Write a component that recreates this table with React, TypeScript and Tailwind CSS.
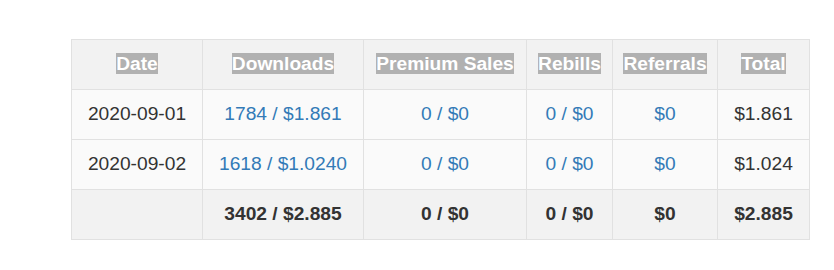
const headers = ['Date', 'Downloads', 'Premium Sales', 'Rebills', 'Referrals', 'Total'];
const widths = ['w-[131px]', 'w-[161px]', 'w-[163px]', 'w-[86px]', 'w-[105px]', 'w-[92px]'];

const rows = [
  { date: '2020-09-01', downloads: '1784 / $1.861', premium: '0 / $0', rebills: '0 / $0', referrals: '$0', total: '$1.861' },
  { date: '2020-09-02', downloads: '1618 / $1.0240', premium: '0 / $0', rebills: '0 / $0', referrals: '$0', total: '$1.024' },
];

const cell = 'h-[50px] border border-[#e1e1e1] text-center align-middle p-0';
const link = 'text-[#337ab7]';

export default function App() {
  return (
    <div className="min-h-[270px] bg-white pl-[71px] pt-[39px] text-[19.2px] text-[#333] [font-family:'Liberation_Sans',Arial,sans-serif]">
      <table className="w-[738px] table-fixed border-collapse">
        <colgroup>
          {widths.map((w) => (
            <col key={w} className={w} />
          ))}
        </colgroup>
        <thead>
          <tr className="bg-[#f2f2f2]">
            {headers.map((h) => (
              <th key={h} className={`${cell} font-bold`}>
                <span className="bg-[#b1b1b1] text-white">{h}</span>
              </th>
            ))}
          </tr>
        </thead>
        <tbody>
          {rows.map((r) => (
            <tr key={r.date} className="bg-[#fafafa]">
              <td className={cell}>{r.date}</td>
              <td className={cell}><a className={link}>{r.downloads}</a></td>
              <td className={cell}><a className={link}>{r.premium}</a></td>
              <td className={cell}><a className={link}>{r.rebills}</a></td>
              <td className={cell}><a className={link}>{r.referrals}</a></td>
              <td className={cell}>{r.total}</td>
            </tr>
          ))}
          <tr className="bg-[#f2f2f2] font-bold">
            <td className={cell}></td>
            <td className={cell}>3402 / $2.885</td>
            <td className={cell}>0 / $0</td>
            <td className={cell}>0 / $0</td>
            <td className={cell}>$0</td>
            <td className={cell}>$2.885</td>
          </tr>
        </tbody>
      </table>
    </div>
  );
}
